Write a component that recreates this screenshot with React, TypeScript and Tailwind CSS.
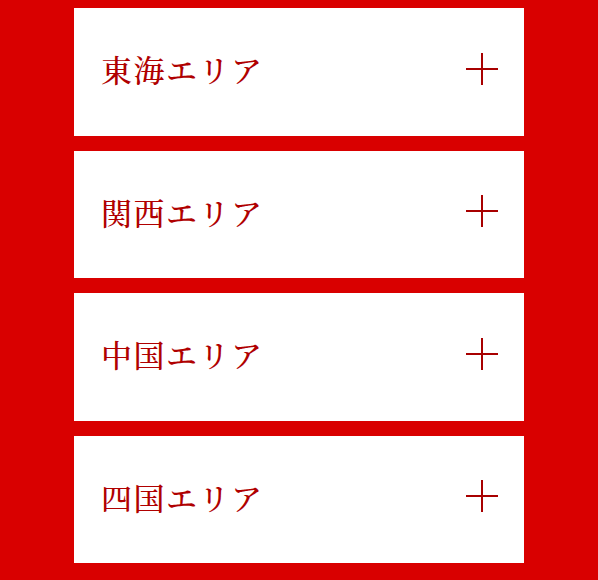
import React from "react";

const items = ["東海エリア", "関西エリア", "中国エリア", "四国エリア"];

export default function App() {
  return (
    <div className="w-[598px] h-[580px] bg-[#d90000] flex flex-col items-center pt-[8px] gap-[15px]">
      {items.map((t) => (
        <div key={t} className="w-[450px] h-[127.5px] bg-white flex items-center justify-between pl-[27px] pr-[26px]">
          <span
            className="text-[31px] font-medium text-[#b00000] tracking-[1.5px] leading-none -mt-[6px]"
            style={{ fontFamily: '"Noto Serif CJK JP", "Liberation Serif", "Noto Sans CJK JP", serif' }}
          >
            {t}
          </span>
          <span className="relative w-[32px] h-[32px] -mt-[6px]">
            <span className="absolute left-0 right-0 top-[15px] h-[2px] bg-[#a80000]" />
            <span className="absolute top-0 bottom-0 left-[15px] w-[2px] bg-[#a80000]" />
          </span>
        </div>
      ))}
    </div>
  );
}
